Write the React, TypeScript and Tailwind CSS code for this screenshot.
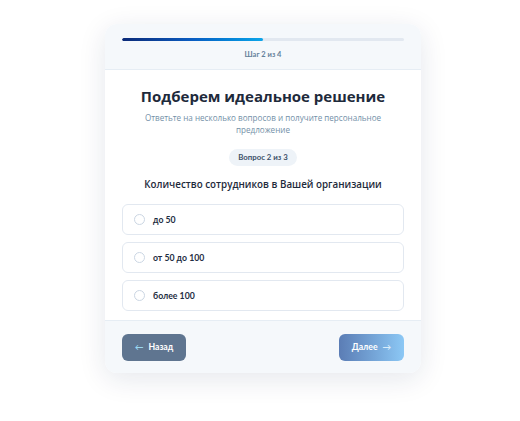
import React, { useState } from 'react';

const options = ['до 50', 'от 50 до 100', 'более 100'];

const App: React.FC = () => {
  const [selected, setSelected] = useState<number | null>(null);

  return (
    <div className="w-[520px] h-[421px] bg-white flex justify-center pt-[24px] pl-[6px]">
      <div className="w-[316px] h-[349px] rounded-[12px] bg-white shadow-[0_6px_28px_rgba(15,40,80,0.11)] overflow-hidden flex flex-col">
        {/* Header */}
        <div className="bg-[#f5f8fb] border-b border-[#e6edf4] px-[17px] pt-[14px] h-[46px]">
          <div className="h-[3px] rounded-full bg-[#e2e8f0] overflow-hidden">
            <div className="h-full w-1/2 rounded-full bg-gradient-to-r from-[#0b2a78] via-[#0a5dc2] to-[#0ea5e9]" />
          </div>
          <p className="mt-[8px] text-center text-[7.5px] font-bold text-[#64809a] font-['Lato',sans-serif]">
            Шаг 2 из 4
          </p>
        </div>

        {/* Body */}
        <div className="flex-1 px-[17px] pt-[16px] flex flex-col items-center">
          <h1 className="text-[15px] leading-[20px] font-bold text-[#1e2a3b] font-['Open_Sans',sans-serif]">
            Подберем идеальное решение
          </h1>
          <p className="mt-[6px] w-[260px] text-center text-[8.1px] leading-[12px] text-[#7390a8] font-['Open_Sans',sans-serif]">
            Ответьте на несколько вопросов и получите персональное предложение
          </p>
          <span className="mt-[13px] h-[17px] px-[9px] flex items-center rounded-full bg-[#eef3f8] text-[7.8px] font-bold text-[#3b5068] font-['Lato',sans-serif]">
            Вопрос 2 из 3
          </span>
          <h2 className="mt-[12px] text-[9.8px] leading-[14px] font-semibold text-[#1e2a3b] font-['Open_Sans',sans-serif]">
            Количество сотрудников в Вашей организации
          </h2>
          <div className="mt-[12px] w-full flex flex-col gap-[7px]">
            {options.map((o, i) => (
              <button
                key={o}
                onClick={() => setSelected(i)}
                className="h-[31px] w-full rounded-[6px] border border-[#e2e8f0] bg-white flex items-center px-[11px] gap-[8px] text-left"
              >
                <span
                  className={`w-[11px] h-[11px] rounded-full border-[1.5px] ${
                    selected === i ? 'border-[#0a5dc2] bg-[#0a5dc2]' : 'border-[#cbd6e3]'
                  }`}
                />
                <span className="text-[8.7px] font-bold text-[#1e2d42] font-['Lato',sans-serif]">{o}</span>
              </button>
            ))}
          </div>
        </div>

        {/* Footer */}
        <div className="h-[53px] bg-[#f5f8fb] border-t border-[#e6edf4] px-[17px] flex items-center justify-between">
          <button className="h-[27px] w-[64px] rounded-[6px] bg-[#5f7590] text-white text-[8.7px] font-bold font-['Lato',sans-serif] flex items-center justify-center gap-[5px]">
            <span className="text-[#9ad8f0]">←</span> Назад
          </button>
          <button className="h-[27px] w-[65px] rounded-[6px] bg-gradient-to-r from-[#5b7db5] to-[#8cc8f5] text-white text-[8.7px] font-bold font-['Lato',sans-serif] flex items-center justify-center gap-[5px]">
            Далее <span className="text-[#d8ecfb]">→</span>
          </button>
        </div>
      </div>
    </div>
  );
};

export default App;
